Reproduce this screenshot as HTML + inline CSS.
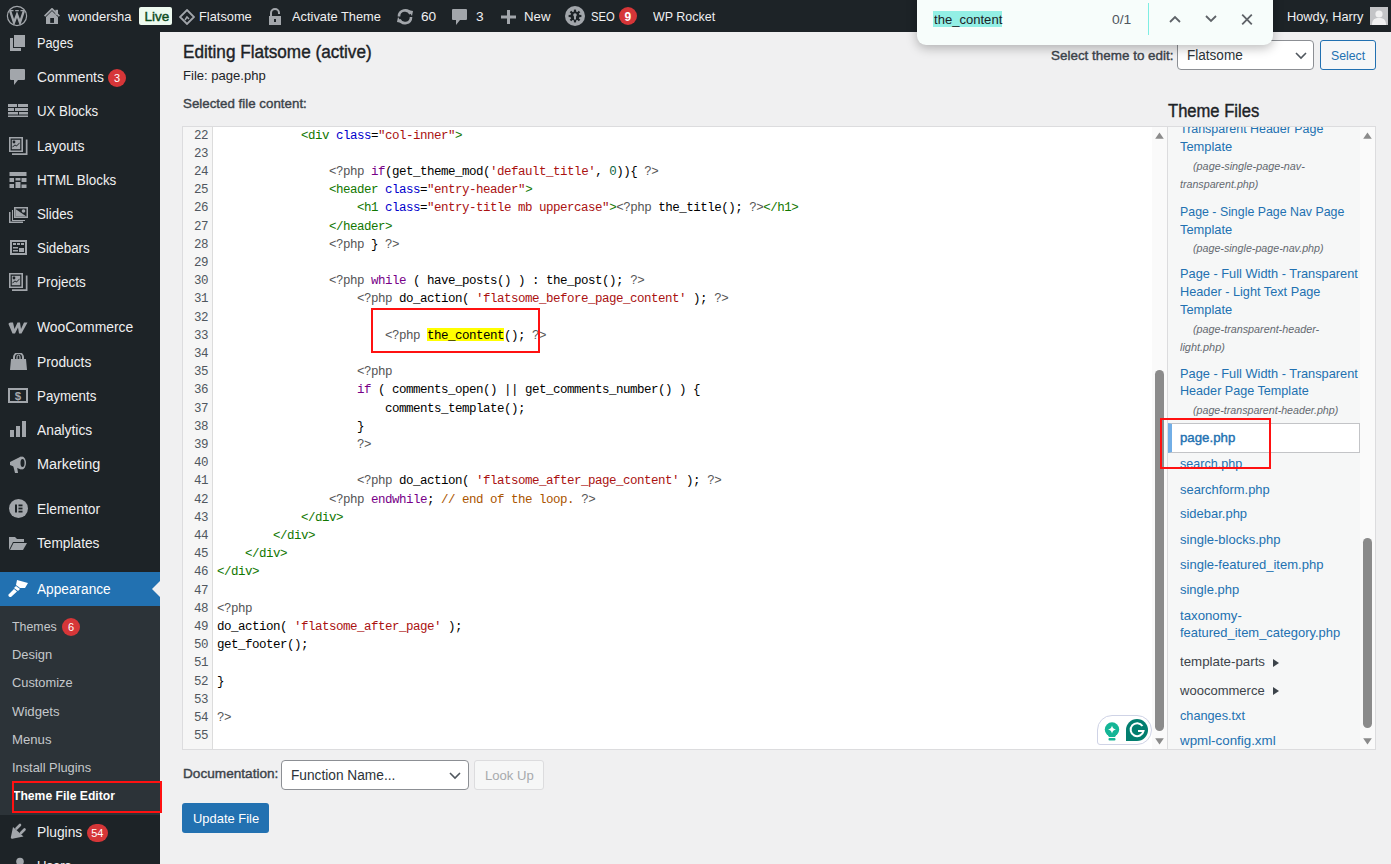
<!DOCTYPE html>
<html><head><meta charset="utf-8"><title>Edit Themes</title>
<style>
html,body{margin:0;padding:0;width:1391px;height:864px;overflow:hidden;background:#f0f0f1}
body{position:relative;font-family:"Liberation Sans", sans-serif}
.t{position:absolute;white-space:nowrap}
.r{position:absolute}
</style></head><body>
<div class="r" style="left:0px;top:0px;width:1391px;height:864px;background:#f0f0f1"></div>
<div class="r" style="left:0px;top:32px;width:160px;height:832px;background:#1d2327"></div>
<div class="r" style="left:0px;top:606px;width:160px;height:209px;background:#2c3338"></div>
<div class="r" style="left:0px;top:572px;width:160px;height:34px;background:#2271b1"></div>
<svg class="r" style="left:152px;top:581px" width="8" height="16" viewBox="0 0 8 16"><path d="M8 0 L0 8 L8 16 Z" fill="#f0f0f1"/></svg>
<div class="r" style="left:0px;top:0px;width:1391px;height:32px;background:#1d2327"></div>
<svg class="r" style="left:6px;top:5px" width="22" height="22" viewBox="0 0 22 22"><circle cx="11" cy="11" r="9.6" fill="none" stroke="#a2a6ab" stroke-width="1.2"/><path d="M4.2 6.2 L8 17.5 L11 9.5 L14 17.5 L17.8 6.2" fill="none" stroke="#a2a6ab" stroke-width="2.3" stroke-linejoin="miter"/><path d="M3.5 5.6 H7.5 M9.2 5.6 H12.8 M14.5 5.6 H18.5" stroke="#a2a6ab" stroke-width="1.2"/></svg>
<svg class="r" style="left:44px;top:8px" width="16" height="16" viewBox="0 0 16 16"><path d="M0.6 8.2 L8 0.8 L15.4 8.2" fill="none" stroke="#a2a6ab" stroke-width="1.7"/><path d="M2 9 L8 3 L14 9 V16 H2 Z" fill="#a2a6ab"/><rect x="11.4" y="1.8" width="2.6" height="5" fill="#a2a6ab"/><rect x="6.2" y="10" width="3.8" height="4.9" fill="#1d2327"/></svg>
<div class="t" id="t1" style="left:68.00px;top:10.07px;font-size:13.5px;line-height:13.5px;color:#f0f0f1;transform:scaleX(0.9626);transform-origin:0 0;">wondersha</div>
<div class="r" style="left:139px;top:7px;width:33px;height:18px;background:#edfaef;border-radius:2px"></div>
<div class="t" style="left:144.50px;top:9.57px;font-size:13.5px;line-height:13.5px;color:#0b4a1b;-webkit-text-stroke:0.4px currentColor;">Live</div>
<svg class="r" style="left:179px;top:9px" width="16" height="16" viewBox="0 0 16 16"><path d="M8 1 L15 8 L8 15 L1 8 Z" fill="none" stroke="#a2a6ab" stroke-width="1.8"/><path d="M6 11 L8 8 L10 10" fill="none" stroke="#a2a6ab" stroke-width="1.5"/></svg>
<div class="t" id="t2" style="left:198.50px;top:10.07px;font-size:13.5px;line-height:13.5px;color:#f0f0f1;transform:scaleX(0.9503);transform-origin:0 0;">Flatsome</div>
<svg class="r" style="left:268px;top:8px" width="14" height="17" viewBox="0 0 14 17"><path d="M3 8 V5 A4 4 0 0 1 11 5 V6" fill="none" stroke="#a2a6ab" stroke-width="2"/><rect x="1" y="8" width="12" height="9" fill="#a2a6ab"/><rect x="6" y="11" width="2" height="3" fill="#1d2327"/></svg>
<div class="t" id="t3" style="left:291.70px;top:10.07px;font-size:13.5px;line-height:13.5px;color:#f0f0f1;transform:scaleX(0.9500);transform-origin:0 0;">Activate Theme</div>
<svg class="r" style="left:396px;top:8px" width="18" height="17" viewBox="0 0 18 17"><path d="M3 8.5 A6 6 0 0 1 14.5 6" fill="none" stroke="#a2a6ab" stroke-width="2.6"/><path d="M15 9 A6 6 0 0 1 3.5 11.5" fill="none" stroke="#a2a6ab" stroke-width="2.6"/><path d="M12 2 L17 3 L16 8 Z" fill="#a2a6ab"/><path d="M6 15 L1 14 L2 9 Z" fill="#a2a6ab"/></svg>
<div class="t" id="t4" style="left:420.60px;top:10.07px;font-size:13.5px;line-height:13.5px;color:#f0f0f1;transform:scaleX(1.0126);transform-origin:0 0;">60</div>
<svg class="r" style="left:452px;top:9px" width="15" height="16" viewBox="0 0 15 16"><path d="M1 0 H14 A1 1 0 0 1 15 1 V10 A1 1 0 0 1 14 11 H8 L4 16 V11 H1 A1 1 0 0 1 0 10 V1 A1 1 0 0 1 1 0 Z" fill="#a2a6ab"/></svg>
<div class="t" id="t5" style="left:475.70px;top:10.07px;font-size:13.5px;line-height:13.5px;color:#f0f0f1;transform:scaleX(1.0141);transform-origin:0 0;">3</div>
<svg class="r" style="left:501px;top:10px" width="15" height="14" viewBox="0 0 15 14"><rect x="6" y="0" width="3" height="14" fill="#a2a6ab"/><rect x="0" y="5.5" width="15" height="3" fill="#a2a6ab"/></svg>
<div class="t" id="t6" style="left:524.30px;top:10.07px;font-size:13.5px;line-height:13.5px;color:#f0f0f1;transform:scaleX(0.9807);transform-origin:0 0;">New</div>
<svg class="r" style="left:565px;top:6px" width="20" height="20" viewBox="0 0 20 20"><circle cx="10" cy="10" r="10" fill="#a2a6ab"/><g fill="#1d2327"><circle cx="10" cy="10" r="4.6"/><rect x="8.9" y="3.6" width="2.2" height="3" transform="rotate(0 10 10)"/><rect x="8.9" y="3.6" width="2.2" height="3" transform="rotate(45 10 10)"/><rect x="8.9" y="3.6" width="2.2" height="3" transform="rotate(90 10 10)"/><rect x="8.9" y="3.6" width="2.2" height="3" transform="rotate(135 10 10)"/><rect x="8.9" y="3.6" width="2.2" height="3" transform="rotate(180 10 10)"/><rect x="8.9" y="3.6" width="2.2" height="3" transform="rotate(225 10 10)"/><rect x="8.9" y="3.6" width="2.2" height="3" transform="rotate(270 10 10)"/><rect x="8.9" y="3.6" width="2.2" height="3" transform="rotate(315 10 10)"/></g><circle cx="10" cy="9" r="1.8" fill="#a2a6ab"/><rect x="9" y="9" width="2" height="4.5" fill="#a2a6ab"/></svg>
<div class="t" id="t7" style="left:590.80px;top:10.07px;font-size:13.5px;line-height:13.5px;color:#f0f0f1;transform:scaleX(0.8302);transform-origin:0 0;">SEO</div>
<div class="r" style="left:619px;top:7px;width:18px;height:18px;background:#d63638;border-radius:50%"></div>
<div class="t" style="left:624.50px;top:10.84px;font-size:12px;line-height:12px;color:#ffffff;font-weight:700;">9</div>
<div class="t" id="t8" style="left:652.60px;top:10.07px;font-size:13.5px;line-height:13.5px;color:#f0f0f1;transform:scaleX(0.9237);transform-origin:0 0;">WP Rocket</div>
<div class="t" id="t9" style="left:1286.60px;top:10.07px;font-size:13.5px;line-height:13.5px;color:#f0f0f1;transform:scaleX(0.9455);transform-origin:0 0;">Howdy, Harry</div>
<div class="r" style="left:1370px;top:7px;width:18px;height:18px;background:#c3c4c7"></div>
<svg class="r" style="left:1370px;top:7px" width="18" height="18" viewBox="0 0 18 18"><circle cx="9" cy="7" r="3.6" fill="#f0f0f1"/><path d="M2 18 C2 12 5 11 9 11 C13 11 16 12 16 18 Z" fill="#f0f0f1"/></svg>
<div class="t" id="t10" style="left:182.60px;top:43.26px;font-size:18px;line-height:18px;color:#1d2327;transform:scaleX(0.9523);transform-origin:0 0;-webkit-text-stroke:0.4px currentColor;">Editing Flatsome (active)</div>
<div class="t" id="t11" style="left:182.60px;top:68.79px;font-size:13px;line-height:13px;color:#1d2327;transform:scaleX(1.0046);transform-origin:0 0;">File: page.php</div>
<div class="t" id="t12" style="left:182.60px;top:96.87px;font-size:13.5px;line-height:13.5px;color:#3c434a;transform:scaleX(0.9877);transform-origin:0 0;-webkit-text-stroke:0.4px currentColor;">Selected file content:</div>
<div class="t" id="t13" style="left:1051.00px;top:49.07px;font-size:13.5px;line-height:13.5px;color:#3c434a;transform:scaleX(0.9954);transform-origin:0 0;-webkit-text-stroke:0.4px currentColor;">Select theme to edit:</div>
<div class="r" style="left:1177px;top:40px;width:137px;height:30px;background:#fff;border:1px solid #8c8f94;border-radius:4px;box-sizing:border-box"></div>
<div class="t" id="t14" style="left:1186.60px;top:48.15px;font-size:14px;line-height:14px;color:#2c3338;transform:scaleX(0.9676);transform-origin:0 0;">Flatsome</div>
<svg class="r" style="left:1295px;top:51.5px" width="12" height="8" viewBox="0 0 12 8"><path d="M1 1 L6 6 L11 1" fill="none" stroke="#50575e" stroke-width="1.6"/></svg>
<div class="r" style="left:1320px;top:40px;width:56px;height:30px;background:#f6f7f7;border:1px solid #2271b1;border-radius:3px;box-sizing:border-box"></div>
<div class="t" id="t15" style="left:1331.40px;top:48.57px;font-size:13.5px;line-height:13.5px;color:#2271b1;transform:scaleX(0.9096);transform-origin:0 0;">Select</div>
<div class="t" id="t16" style="left:36.50px;top:35.75px;font-size:14px;line-height:14px;color:#f0f0f1;transform:scaleX(0.9109);transform-origin:0 0;">Pages</div>
<div class="t" id="t17" style="left:36.50px;top:69.95px;font-size:14px;line-height:14px;color:#f0f0f1;transform:scaleX(0.9873);transform-origin:0 0;">Comments</div>
<div class="t" id="t18" style="left:36.50px;top:103.75px;font-size:14px;line-height:14px;color:#f0f0f1;transform:scaleX(0.9476);transform-origin:0 0;">UX Blocks</div>
<div class="t" id="t19" style="left:36.50px;top:138.95px;font-size:14px;line-height:14px;color:#f0f0f1;transform:scaleX(0.9667);transform-origin:0 0;">Layouts</div>
<div class="t" id="t20" style="left:36.50px;top:172.55px;font-size:14px;line-height:14px;color:#f0f0f1;transform:scaleX(0.9587);transform-origin:0 0;">HTML Blocks</div>
<div class="t" id="t21" style="left:36.50px;top:206.55px;font-size:14px;line-height:14px;color:#f0f0f1;transform:scaleX(0.9490);transform-origin:0 0;">Slides</div>
<div class="t" id="t22" style="left:36.50px;top:240.75px;font-size:14px;line-height:14px;color:#f0f0f1;transform:scaleX(0.9536);transform-origin:0 0;">Sidebars</div>
<div class="t" id="t23" style="left:36.50px;top:274.95px;font-size:14px;line-height:14px;color:#f0f0f1;transform:scaleX(0.9630);transform-origin:0 0;">Projects</div>
<div class="t" id="t24" style="left:36.50px;top:320.05px;font-size:14px;line-height:14px;color:#f0f0f1;transform:scaleX(0.9921);transform-origin:0 0;">WooCommerce</div>
<div class="t" id="t25" style="left:36.50px;top:354.75px;font-size:14px;line-height:14px;color:#f0f0f1;transform:scaleX(0.9833);transform-origin:0 0;">Products</div>
<div class="t" id="t26" style="left:36.50px;top:388.65px;font-size:14px;line-height:14px;color:#f0f0f1;transform:scaleX(0.9526);transform-origin:0 0;">Payments</div>
<div class="t" id="t27" style="left:36.50px;top:422.65px;font-size:14px;line-height:14px;color:#f0f0f1;transform:scaleX(0.9857);transform-origin:0 0;">Analytics</div>
<div class="t" id="t28" style="left:36.50px;top:456.65px;font-size:14px;line-height:14px;color:#f0f0f1;transform:scaleX(1.0309);transform-origin:0 0;">Marketing</div>
<div class="t" id="t29" style="left:36.50px;top:501.85px;font-size:14px;line-height:14px;color:#f0f0f1;transform:scaleX(0.9885);transform-origin:0 0;">Elementor</div>
<div class="t" id="t30" style="left:36.50px;top:536.15px;font-size:14px;line-height:14px;color:#f0f0f1;transform:scaleX(0.9782);transform-origin:0 0;">Templates</div>
<div class="t" id="t31" style="left:36.50px;top:582.15px;font-size:14px;line-height:14px;color:#ffffff;transform:scaleX(0.9762);transform-origin:0 0;">Appearance</div>
<div class="t" id="t32" style="left:36.50px;top:824.75px;font-size:14px;line-height:14px;color:#f0f0f1;transform:scaleX(0.9849);transform-origin:0 0;">Plugins</div>
<div class="t" id="t33" style="left:36.50px;top:859.15px;font-size:14px;line-height:14px;color:#f0f0f1;transform:scaleX(0.9378);transform-origin:0 0;">Users</div>
<div class="r" style="left:108px;top:68.5px;width:18px;height:18px;background:#d63638;border-radius:9px"></div>
<div class="t" style="left:108px;top:68.5px;width:18px;height:18px;line-height:18px;text-align:center;font-size:11px;color:#fff">3</div>
<div class="r" style="left:62px;top:618px;width:18px;height:18px;background:#d63638;border-radius:9px"></div>
<div class="t" style="left:62px;top:618px;width:18px;height:18px;line-height:18px;text-align:center;font-size:11px;color:#fff">6</div>
<div class="r" style="left:86.5px;top:824px;width:21.5px;height:18px;background:#d63638;border-radius:9px"></div>
<div class="t" style="left:86.5px;top:824px;width:21.5px;height:18px;line-height:18px;text-align:center;font-size:11px;color:#fff">54</div>
<div class="t" id="t34" style="left:12.30px;top:619.99px;font-size:13px;line-height:13px;color:#c5c8cb;transform:scaleX(0.9526);transform-origin:0 0;">Themes</div>
<div class="t" id="t35" style="left:12.30px;top:648.19px;font-size:13px;line-height:13px;color:#c5c8cb;transform:scaleX(0.9927);transform-origin:0 0;">Design</div>
<div class="t" id="t36" style="left:12.30px;top:676.39px;font-size:13px;line-height:13px;color:#c5c8cb;transform:scaleX(0.9861);transform-origin:0 0;">Customize</div>
<div class="t" id="t37" style="left:12.30px;top:704.59px;font-size:13px;line-height:13px;color:#c5c8cb;transform:scaleX(1.0132);transform-origin:0 0;">Widgets</div>
<div class="t" id="t38" style="left:12.30px;top:732.79px;font-size:13px;line-height:13px;color:#c5c8cb;transform:scaleX(1.0117);transform-origin:0 0;">Menus</div>
<div class="t" id="t39" style="left:12.30px;top:760.99px;font-size:13px;line-height:13px;color:#c5c8cb;transform:scaleX(0.9869);transform-origin:0 0;">Install Plugins</div>
<div class="t" id="t40" style="left:13.40px;top:788.99px;font-size:13px;line-height:13px;color:#ffffff;transform:scaleX(0.9345);transform-origin:0 0;font-weight:700;">Theme File Editor</div>
<svg class="r" style="left:10px;top:35px" width="15" height="16" viewBox="0 0 15 16"><rect x="4" y="0" width="11" height="12" fill="#a2a6ab"/><path d="M0 3 H3 V13 H11 V16 H0 Z" fill="#a2a6ab"/></svg>
<svg class="r" style="left:10px;top:69px" width="15" height="16" viewBox="0 0 15 16"><path d="M1 0 H14 A1 1 0 0 1 15 1 V10 A1 1 0 0 1 14 11 H8 L4 16 V11 H1 A1 1 0 0 1 0 10 V1 A1 1 0 0 1 1 0 Z" fill="#a2a6ab"/></svg>
<svg class="r" style="left:8px;top:104px" width="20" height="13" viewBox="0 0 20 13"><rect x="0" y="0" width="9" height="3" fill="#a2a6ab"/><rect x="10" y="0" width="10" height="3" fill="#a2a6ab"/><rect x="0" y="4" width="6" height="3" fill="#a2a6ab"/><rect x="7" y="4" width="13" height="3" fill="#a2a6ab"/><rect x="0" y="8" width="10" height="2.5" fill="#a2a6ab"/><rect x="11" y="8" width="9" height="2.5" fill="#a2a6ab"/><rect x="0" y="11.5" width="20" height="1.5" fill="#a2a6ab"/></svg>
<svg class="r" style="left:9px;top:137px" width="19" height="18" viewBox="0 0 19 18"><path d="M0 0 H14 V15 H0 Z M1.6 1.6 V13.4 H12.4 V1.6 Z" fill="#a2a6ab" fill-rule="evenodd"/><path d="M15.5 2.5 H18.5 V18 H3 V16.3 H16.8 V2.5 Z" fill="#a2a6ab"/><rect x="2.8" y="2.8" width="8.4" height="9.4" fill="#a2a6ab"/><circle cx="5" cy="5" r="1.4" fill="#1d2327"/><path d="M3.5 9.5 L6 7.5 L7.5 8.5 L10.5 5.5 L10.5 6.5 L7.5 9.6 L6 8.6 L3.5 10.5 Z" fill="#1d2327"/></svg>
<svg class="r" style="left:9px;top:172px" width="18" height="16" viewBox="0 0 18 16"><rect x="0.5" y="0" width="17" height="4" fill="#a2a6ab"/><rect x="0.5" y="6" width="4.5" height="4" fill="#a2a6ab"/><rect x="6.5" y="6" width="5" height="2.5" fill="#a2a6ab"/><rect x="12.5" y="6" width="5" height="4" fill="#a2a6ab"/><rect x="0.5" y="12" width="4.5" height="4" fill="#a2a6ab"/><rect x="6.5" y="10" width="5" height="6" fill="#a2a6ab"/><rect x="12.5" y="12.5" width="5" height="3.5" fill="#a2a6ab"/></svg>
<svg class="r" style="left:9px;top:207px" width="19" height="16" viewBox="0 0 19 16"><path d="M5 0 H19 V11 H5 Z M6.5 1.5 V9.5 H17.5 V1.5 Z" fill="#a2a6ab" fill-rule="evenodd"/><path d="M6.5 2 L17.5 9.5 H6.5 Z" fill="#a2a6ab"/><circle cx="14.5" cy="4" r="1.8" fill="#a2a6ab"/><path d="M3 3 H4 V13 H16 V14 H3 Z" fill="#a2a6ab"/><path d="M0 5 H1.5 V14.5 H14 V16 H0 Z" fill="#a2a6ab"/></svg>
<svg class="r" style="left:10px;top:240px" width="17" height="15" viewBox="0 0 17 15"><path d="M0 0 H17 V15 H0 Z M2 2 V13 H15 V2 Z" fill="#a2a6ab" fill-rule="evenodd"/><rect x="3" y="3" width="3" height="2" fill="#a2a6ab"/><rect x="7" y="3" width="3" height="2" fill="#a2a6ab"/><rect x="11" y="3" width="3" height="2" fill="#a2a6ab"/><rect x="3" y="7" width="5" height="1.5" fill="#a2a6ab"/><rect x="3" y="10" width="5" height="1.5" fill="#a2a6ab"/><rect x="9" y="8" width="5" height="4" fill="#a2a6ab"/></svg>
<svg class="r" style="left:9px;top:273px" width="19" height="18" viewBox="0 0 19 18"><path d="M0 0 H14 V15 H0 Z M1.6 1.6 V13.4 H12.4 V1.6 Z" fill="#a2a6ab" fill-rule="evenodd"/><path d="M15.5 2.5 H18.5 V18 H3 V16.3 H16.8 V2.5 Z" fill="#a2a6ab"/><rect x="2.8" y="2.8" width="8.4" height="9.4" fill="#a2a6ab"/><circle cx="5" cy="5" r="1.4" fill="#1d2327"/><path d="M3.5 9.5 L6 7.5 L7.5 8.5 L10.5 5.5 L10.5 6.5 L7.5 9.6 L6 8.6 L3.5 10.5 Z" fill="#1d2327"/></svg>
<svg class="r" style="left:8px;top:322px" width="20" height="12" viewBox="0 0 20 12"><path d="M0.5 2 Q0.5 0.5 2.5 0.5 L5 0.5 L6.5 7 L9.5 0.5 L12 0.5 L13 7 L16 0.5 L19.5 0.5 L13.5 11.5 L11 11.5 L10 5.5 L7 11.5 L4.5 11.5 Z" fill="#a2a6ab"/></svg>
<svg class="r" style="left:10px;top:353px" width="17" height="17" viewBox="0 0 17 17"><path d="M4 6 V4 A4.5 4 0 0 1 13 4 V6" fill="none" stroke="#a2a6ab" stroke-width="2"/><path d="M7 6 V4 A1.5 2 0 0 1 10 4 V6" fill="none" stroke="#a2a6ab" stroke-width="1.2"/><path d="M1 6 H16 L17 17 H0 Z" fill="#a2a6ab"/></svg>
<svg class="r" style="left:8px;top:388px" width="20" height="15" viewBox="0 0 20 15"><path d="M0 0 H20 V15 H0 Z M2 2 V13 H18 V2 Z" fill="#a2a6ab" fill-rule="evenodd"/><text x="10" y="12" text-anchor="middle" font-family="Liberation Sans" font-size="11.5" font-weight="700" fill="#a2a6ab">$</text></svg>
<svg class="r" style="left:10px;top:421px" width="16" height="16" viewBox="0 0 16 16"><rect x="0" y="9" width="4" height="7" fill="#a2a6ab"/><rect x="6" y="5" width="4" height="11" fill="#a2a6ab"/><rect x="12" y="0" width="4" height="16" fill="#a2a6ab"/></svg>
<svg class="r" style="left:9px;top:455px" width="18" height="18" viewBox="0 0 18 18"><path d="M1 7 L12 1.5 V14.5 L1 10 Z" fill="#a2a6ab"/><ellipse cx="13" cy="8" rx="4" ry="6.5" fill="#a2a6ab"/><ellipse cx="13.5" cy="8" rx="2" ry="4" fill="#1d2327"/><path d="M4 10 L8 11.5 L9 18 L6 18 Z" fill="#a2a6ab"/></svg>
<svg class="r" style="left:9px;top:499px" width="19" height="19" viewBox="0 0 19 19"><circle cx="9.5" cy="9.5" r="9.5" fill="#a2a6ab"/><rect x="6" y="5.5" width="2" height="8" fill="#1d2327"/><rect x="9.5" y="5.5" width="4" height="1.8" fill="#1d2327"/><rect x="9.5" y="8.6" width="4" height="1.8" fill="#1d2327"/><rect x="9.5" y="11.7" width="4" height="1.8" fill="#1d2327"/></svg>
<svg class="r" style="left:9px;top:536px" width="18" height="14" viewBox="0 0 18 14"><path d="M0 1 H6 L8 3 H15 V6 H4 L0 14 Z" fill="#a2a6ab"/><path d="M4.5 7 H18 L14 14 H1 Z" fill="#a2a6ab"/></svg>
<svg class="r" style="left:8px;top:580px" width="20" height="17" viewBox="0 0 20 17"><path d="M9 0 L20 3 L17 8 L12 8 L8 5 Z" fill="#fff"/><path d="M8 6 L12 9 L10 11 L6 8 Z" fill="#fff"/><path d="M6 9 L9 11.5 L3 17 A2 2 0 0 1 0.5 14.5 Z" fill="#fff"/></svg>
<svg class="r" style="left:10px;top:822px" width="17" height="18" viewBox="0 0 17 18"><path d="M6.5 6.5 L10 3" stroke="#a2a6ab" stroke-width="2.6" stroke-linecap="round"/><path d="M11 11 L14.5 7.5" stroke="#a2a6ab" stroke-width="2.6" stroke-linecap="round"/><path d="M3 5 L13.5 14.5 L3.5 16.5 Q1 17.5 0.8 15.5 Z" fill="#a2a6ab"/></svg>
<svg class="r" style="left:13px;top:857px" width="14" height="10" viewBox="0 0 14 10"><circle cx="7" cy="4.5" r="3.8" fill="#a2a6ab"/></svg>
<div class="r" style="left:182px;top:126px;width:986px;height:624px;background:#fff;border:1px solid #dcdcde;box-sizing:border-box"></div>
<div class="r" style="left:183px;top:127px;width:30px;height:622px;background:#f6f6f6;border-right:1px solid #dcdcdc;box-sizing:border-box"></div>
<div class="r" style="left:1152px;top:127px;width:15px;height:622px;background:#fafafa"></div>
<div class="r" style="left:1155px;top:370px;width:9px;height:361px;background:#8b8b8b;border-radius:4.5px"></div>
<svg class="r" style="left:1155px;top:132px" width="9" height="7" viewBox="0 0 9 7"><path d="M4.5 0.5 L8.8 6.8 H0.2 Z" fill="#8b8b8b"/></svg>
<svg class="r" style="left:1155px;top:738px" width="9" height="7" viewBox="0 0 9 7"><path d="M0.2 0.2 H8.8 L4.5 6.5 Z" fill="#8b8b8b"/></svg>
<div class="r" style="left:427px;top:328px;width:77px;height:13px;background:#ffff00"></div>
<div class="t" style="left:183.00px;top:129.52px;font-size:12.5px;line-height:12.5px;color:#50575e;font-family:'Liberation Mono', monospace;letter-spacing:-0.5px;width:25px;text-align:right;">22</div>
<div class="t" style="left:217.00px;top:129.52px;font-size:12.5px;line-height:12.5px;color:#000;font-family:'Liberation Mono', monospace;letter-spacing:-0.5px;white-space:pre;"><span style="color:#000">            </span><span style="color:#170">&lt;div</span><span style="color:#000"> </span><span style="color:#00c">class</span><span style="color:#000">=</span><span style="color:#a11">&quot;col-inner&quot;</span><span style="color:#170">&gt;</span></div>
<div class="t" style="left:183.00px;top:147.72px;font-size:12.5px;line-height:12.5px;color:#50575e;font-family:'Liberation Mono', monospace;letter-spacing:-0.5px;width:25px;text-align:right;">23</div>
<div class="t" style="left:183.00px;top:165.92px;font-size:12.5px;line-height:12.5px;color:#50575e;font-family:'Liberation Mono', monospace;letter-spacing:-0.5px;width:25px;text-align:right;">24</div>
<div class="t" style="left:217.00px;top:165.92px;font-size:12.5px;line-height:12.5px;color:#000;font-family:'Liberation Mono', monospace;letter-spacing:-0.5px;white-space:pre;"><span style="color:#000">                </span><span style="color:#555">&lt;?php</span><span style="color:#000"> </span><span style="color:#708">if</span><span style="color:#000">(get_theme_mod(</span><span style="color:#a11">&#x27;default_title&#x27;</span><span style="color:#000">, </span><span style="color:#164">0</span><span style="color:#000">)){ </span><span style="color:#555">?&gt;</span></div>
<div class="t" style="left:183.00px;top:184.12px;font-size:12.5px;line-height:12.5px;color:#50575e;font-family:'Liberation Mono', monospace;letter-spacing:-0.5px;width:25px;text-align:right;">25</div>
<div class="t" style="left:217.00px;top:184.12px;font-size:12.5px;line-height:12.5px;color:#000;font-family:'Liberation Mono', monospace;letter-spacing:-0.5px;white-space:pre;"><span style="color:#000">                </span><span style="color:#170">&lt;header</span><span style="color:#000"> </span><span style="color:#00c">class</span><span style="color:#000">=</span><span style="color:#a11">&quot;entry-header&quot;</span><span style="color:#170">&gt;</span></div>
<div class="t" style="left:183.00px;top:202.32px;font-size:12.5px;line-height:12.5px;color:#50575e;font-family:'Liberation Mono', monospace;letter-spacing:-0.5px;width:25px;text-align:right;">26</div>
<div class="t" style="left:217.00px;top:202.32px;font-size:12.5px;line-height:12.5px;color:#000;font-family:'Liberation Mono', monospace;letter-spacing:-0.5px;white-space:pre;"><span style="color:#000">                    </span><span style="color:#170">&lt;h1</span><span style="color:#000"> </span><span style="color:#00c">class</span><span style="color:#000">=</span><span style="color:#a11">&quot;entry-title mb uppercase&quot;</span><span style="color:#170">&gt;</span><span style="color:#555">&lt;?php</span><span style="color:#000"> the_title(); </span><span style="color:#555">?&gt;</span><span style="color:#170">&lt;/h1&gt;</span></div>
<div class="t" style="left:183.00px;top:220.52px;font-size:12.5px;line-height:12.5px;color:#50575e;font-family:'Liberation Mono', monospace;letter-spacing:-0.5px;width:25px;text-align:right;">27</div>
<div class="t" style="left:217.00px;top:220.52px;font-size:12.5px;line-height:12.5px;color:#000;font-family:'Liberation Mono', monospace;letter-spacing:-0.5px;white-space:pre;"><span style="color:#000">                </span><span style="color:#170">&lt;/header&gt;</span></div>
<div class="t" style="left:183.00px;top:238.72px;font-size:12.5px;line-height:12.5px;color:#50575e;font-family:'Liberation Mono', monospace;letter-spacing:-0.5px;width:25px;text-align:right;">28</div>
<div class="t" style="left:217.00px;top:238.72px;font-size:12.5px;line-height:12.5px;color:#000;font-family:'Liberation Mono', monospace;letter-spacing:-0.5px;white-space:pre;"><span style="color:#000">                </span><span style="color:#555">&lt;?php</span><span style="color:#000"> } </span><span style="color:#555">?&gt;</span></div>
<div class="t" style="left:183.00px;top:256.92px;font-size:12.5px;line-height:12.5px;color:#50575e;font-family:'Liberation Mono', monospace;letter-spacing:-0.5px;width:25px;text-align:right;">29</div>
<div class="t" style="left:183.00px;top:275.12px;font-size:12.5px;line-height:12.5px;color:#50575e;font-family:'Liberation Mono', monospace;letter-spacing:-0.5px;width:25px;text-align:right;">30</div>
<div class="t" style="left:217.00px;top:275.12px;font-size:12.5px;line-height:12.5px;color:#000;font-family:'Liberation Mono', monospace;letter-spacing:-0.5px;white-space:pre;"><span style="color:#000">                </span><span style="color:#555">&lt;?php</span><span style="color:#000"> </span><span style="color:#708">while</span><span style="color:#000"> ( have_posts() ) : the_post(); </span><span style="color:#555">?&gt;</span></div>
<div class="t" style="left:183.00px;top:293.32px;font-size:12.5px;line-height:12.5px;color:#50575e;font-family:'Liberation Mono', monospace;letter-spacing:-0.5px;width:25px;text-align:right;">31</div>
<div class="t" style="left:217.00px;top:293.32px;font-size:12.5px;line-height:12.5px;color:#000;font-family:'Liberation Mono', monospace;letter-spacing:-0.5px;white-space:pre;"><span style="color:#000">                    </span><span style="color:#555">&lt;?php</span><span style="color:#000"> do_action( </span><span style="color:#a11">&#x27;flatsome_before_page_content&#x27;</span><span style="color:#000"> ); </span><span style="color:#555">?&gt;</span></div>
<div class="t" style="left:183.00px;top:311.52px;font-size:12.5px;line-height:12.5px;color:#50575e;font-family:'Liberation Mono', monospace;letter-spacing:-0.5px;width:25px;text-align:right;">32</div>
<div class="t" style="left:183.00px;top:329.72px;font-size:12.5px;line-height:12.5px;color:#50575e;font-family:'Liberation Mono', monospace;letter-spacing:-0.5px;width:25px;text-align:right;">33</div>
<div class="t" style="left:217.00px;top:329.72px;font-size:12.5px;line-height:12.5px;color:#000;font-family:'Liberation Mono', monospace;letter-spacing:-0.5px;white-space:pre;"><span style="color:#000">                        </span><span style="color:#555">&lt;?php</span><span style="color:#000"> </span><span style="color:#000">the_content</span><span style="color:#000">(); </span><span style="color:#555">?&gt;</span></div>
<div class="t" style="left:183.00px;top:347.92px;font-size:12.5px;line-height:12.5px;color:#50575e;font-family:'Liberation Mono', monospace;letter-spacing:-0.5px;width:25px;text-align:right;">34</div>
<div class="t" style="left:183.00px;top:366.12px;font-size:12.5px;line-height:12.5px;color:#50575e;font-family:'Liberation Mono', monospace;letter-spacing:-0.5px;width:25px;text-align:right;">35</div>
<div class="t" style="left:217.00px;top:366.12px;font-size:12.5px;line-height:12.5px;color:#000;font-family:'Liberation Mono', monospace;letter-spacing:-0.5px;white-space:pre;"><span style="color:#000">                    </span><span style="color:#555">&lt;?php</span></div>
<div class="t" style="left:183.00px;top:384.32px;font-size:12.5px;line-height:12.5px;color:#50575e;font-family:'Liberation Mono', monospace;letter-spacing:-0.5px;width:25px;text-align:right;">36</div>
<div class="t" style="left:217.00px;top:384.32px;font-size:12.5px;line-height:12.5px;color:#000;font-family:'Liberation Mono', monospace;letter-spacing:-0.5px;white-space:pre;"><span style="color:#000">                    </span><span style="color:#708">if</span><span style="color:#000"> ( comments_open() || get_comments_number() ) {</span></div>
<div class="t" style="left:183.00px;top:402.52px;font-size:12.5px;line-height:12.5px;color:#50575e;font-family:'Liberation Mono', monospace;letter-spacing:-0.5px;width:25px;text-align:right;">37</div>
<div class="t" style="left:217.00px;top:402.52px;font-size:12.5px;line-height:12.5px;color:#000;font-family:'Liberation Mono', monospace;letter-spacing:-0.5px;white-space:pre;"><span style="color:#000">                        </span><span style="color:#000">comments_template();</span></div>
<div class="t" style="left:183.00px;top:420.72px;font-size:12.5px;line-height:12.5px;color:#50575e;font-family:'Liberation Mono', monospace;letter-spacing:-0.5px;width:25px;text-align:right;">38</div>
<div class="t" style="left:217.00px;top:420.72px;font-size:12.5px;line-height:12.5px;color:#000;font-family:'Liberation Mono', monospace;letter-spacing:-0.5px;white-space:pre;"><span style="color:#000">                    </span><span style="color:#000">}</span></div>
<div class="t" style="left:183.00px;top:438.92px;font-size:12.5px;line-height:12.5px;color:#50575e;font-family:'Liberation Mono', monospace;letter-spacing:-0.5px;width:25px;text-align:right;">39</div>
<div class="t" style="left:217.00px;top:438.92px;font-size:12.5px;line-height:12.5px;color:#000;font-family:'Liberation Mono', monospace;letter-spacing:-0.5px;white-space:pre;"><span style="color:#000">                    </span><span style="color:#555">?&gt;</span></div>
<div class="t" style="left:183.00px;top:457.12px;font-size:12.5px;line-height:12.5px;color:#50575e;font-family:'Liberation Mono', monospace;letter-spacing:-0.5px;width:25px;text-align:right;">40</div>
<div class="t" style="left:183.00px;top:475.32px;font-size:12.5px;line-height:12.5px;color:#50575e;font-family:'Liberation Mono', monospace;letter-spacing:-0.5px;width:25px;text-align:right;">41</div>
<div class="t" style="left:217.00px;top:475.32px;font-size:12.5px;line-height:12.5px;color:#000;font-family:'Liberation Mono', monospace;letter-spacing:-0.5px;white-space:pre;"><span style="color:#000">                    </span><span style="color:#555">&lt;?php</span><span style="color:#000"> do_action( </span><span style="color:#a11">&#x27;flatsome_after_page_content&#x27;</span><span style="color:#000"> ); </span><span style="color:#555">?&gt;</span></div>
<div class="t" style="left:183.00px;top:493.52px;font-size:12.5px;line-height:12.5px;color:#50575e;font-family:'Liberation Mono', monospace;letter-spacing:-0.5px;width:25px;text-align:right;">42</div>
<div class="t" style="left:217.00px;top:493.52px;font-size:12.5px;line-height:12.5px;color:#000;font-family:'Liberation Mono', monospace;letter-spacing:-0.5px;white-space:pre;"><span style="color:#000">                </span><span style="color:#555">&lt;?php</span><span style="color:#000"> </span><span style="color:#708">endwhile</span><span style="color:#000">; </span><span style="color:#a50">// end of the loop. </span><span style="color:#555">?&gt;</span></div>
<div class="t" style="left:183.00px;top:511.72px;font-size:12.5px;line-height:12.5px;color:#50575e;font-family:'Liberation Mono', monospace;letter-spacing:-0.5px;width:25px;text-align:right;">43</div>
<div class="t" style="left:217.00px;top:511.72px;font-size:12.5px;line-height:12.5px;color:#000;font-family:'Liberation Mono', monospace;letter-spacing:-0.5px;white-space:pre;"><span style="color:#000">            </span><span style="color:#170">&lt;/div&gt;</span></div>
<div class="t" style="left:183.00px;top:529.92px;font-size:12.5px;line-height:12.5px;color:#50575e;font-family:'Liberation Mono', monospace;letter-spacing:-0.5px;width:25px;text-align:right;">44</div>
<div class="t" style="left:217.00px;top:529.92px;font-size:12.5px;line-height:12.5px;color:#000;font-family:'Liberation Mono', monospace;letter-spacing:-0.5px;white-space:pre;"><span style="color:#000">        </span><span style="color:#170">&lt;/div&gt;</span></div>
<div class="t" style="left:183.00px;top:548.12px;font-size:12.5px;line-height:12.5px;color:#50575e;font-family:'Liberation Mono', monospace;letter-spacing:-0.5px;width:25px;text-align:right;">45</div>
<div class="t" style="left:217.00px;top:548.12px;font-size:12.5px;line-height:12.5px;color:#000;font-family:'Liberation Mono', monospace;letter-spacing:-0.5px;white-space:pre;"><span style="color:#000">    </span><span style="color:#170">&lt;/div&gt;</span></div>
<div class="t" style="left:183.00px;top:566.32px;font-size:12.5px;line-height:12.5px;color:#50575e;font-family:'Liberation Mono', monospace;letter-spacing:-0.5px;width:25px;text-align:right;">46</div>
<div class="t" style="left:217.00px;top:566.32px;font-size:12.5px;line-height:12.5px;color:#000;font-family:'Liberation Mono', monospace;letter-spacing:-0.5px;white-space:pre;"><span style="color:#170">&lt;/div&gt;</span></div>
<div class="t" style="left:183.00px;top:584.52px;font-size:12.5px;line-height:12.5px;color:#50575e;font-family:'Liberation Mono', monospace;letter-spacing:-0.5px;width:25px;text-align:right;">47</div>
<div class="t" style="left:183.00px;top:602.72px;font-size:12.5px;line-height:12.5px;color:#50575e;font-family:'Liberation Mono', monospace;letter-spacing:-0.5px;width:25px;text-align:right;">48</div>
<div class="t" style="left:217.00px;top:602.72px;font-size:12.5px;line-height:12.5px;color:#000;font-family:'Liberation Mono', monospace;letter-spacing:-0.5px;white-space:pre;"><span style="color:#555">&lt;?php</span></div>
<div class="t" style="left:183.00px;top:620.92px;font-size:12.5px;line-height:12.5px;color:#50575e;font-family:'Liberation Mono', monospace;letter-spacing:-0.5px;width:25px;text-align:right;">49</div>
<div class="t" style="left:217.00px;top:620.92px;font-size:12.5px;line-height:12.5px;color:#000;font-family:'Liberation Mono', monospace;letter-spacing:-0.5px;white-space:pre;"><span style="color:#000">do_action( </span><span style="color:#a11">&#x27;flatsome_after_page&#x27;</span><span style="color:#000"> );</span></div>
<div class="t" style="left:183.00px;top:639.12px;font-size:12.5px;line-height:12.5px;color:#50575e;font-family:'Liberation Mono', monospace;letter-spacing:-0.5px;width:25px;text-align:right;">50</div>
<div class="t" style="left:217.00px;top:639.12px;font-size:12.5px;line-height:12.5px;color:#000;font-family:'Liberation Mono', monospace;letter-spacing:-0.5px;white-space:pre;"><span style="color:#000">get_footer();</span></div>
<div class="t" style="left:183.00px;top:657.32px;font-size:12.5px;line-height:12.5px;color:#50575e;font-family:'Liberation Mono', monospace;letter-spacing:-0.5px;width:25px;text-align:right;">51</div>
<div class="t" style="left:183.00px;top:675.52px;font-size:12.5px;line-height:12.5px;color:#50575e;font-family:'Liberation Mono', monospace;letter-spacing:-0.5px;width:25px;text-align:right;">52</div>
<div class="t" style="left:217.00px;top:675.52px;font-size:12.5px;line-height:12.5px;color:#000;font-family:'Liberation Mono', monospace;letter-spacing:-0.5px;white-space:pre;"><span style="color:#000">}</span></div>
<div class="t" style="left:183.00px;top:693.72px;font-size:12.5px;line-height:12.5px;color:#50575e;font-family:'Liberation Mono', monospace;letter-spacing:-0.5px;width:25px;text-align:right;">53</div>
<div class="t" style="left:183.00px;top:711.92px;font-size:12.5px;line-height:12.5px;color:#50575e;font-family:'Liberation Mono', monospace;letter-spacing:-0.5px;width:25px;text-align:right;">54</div>
<div class="t" style="left:217.00px;top:711.92px;font-size:12.5px;line-height:12.5px;color:#000;font-family:'Liberation Mono', monospace;letter-spacing:-0.5px;white-space:pre;"><span style="color:#555">?&gt;</span></div>
<div class="t" style="left:183.00px;top:730.12px;font-size:12.5px;line-height:12.5px;color:#50575e;font-family:'Liberation Mono', monospace;letter-spacing:-0.5px;width:25px;text-align:right;">55</div>
<div class="r" style="left:1097px;top:715px;width:55px;height:30px;background:#fff;border:1px solid #cfd3e6;border-radius:15px 15px 15px 3px;box-sizing:border-box"></div>
<svg class="r" style="left:1104px;top:721.5px" width="16" height="19" viewBox="0 0 16 19"><circle cx="8" cy="7.5" r="7.2" fill="#14b596"/><path d="M2.5 11 L5 15 H11 L13.5 11 Z" fill="#14b596"/><rect x="4.5" y="16" width="7" height="2.6" rx="1" fill="#14b596"/><path d="M8 3.5 Q8.6 7 12 7.5 Q8.6 8 8 11.5 Q7.4 8 4 7.5 Q7.4 7 8 3.5 Z" fill="#fff"/></svg>
<svg class="r" style="left:1126px;top:719px" width="22" height="22" viewBox="0 0 22 22"><path d="M11 0 A11 11 0 0 1 11 22 H0 V11 A11 11 0 0 1 11 0 Z" fill="#027e6f"/><path d="M16.5 7 A6.5 6.5 0 1 0 17.5 12 H12" fill="none" stroke="#fff" stroke-width="2"/></svg>
<div class="t" id="t41" style="left:1168.20px;top:101.76px;font-size:18px;line-height:18px;color:#1d2327;transform:scaleX(0.9209);transform-origin:0 0;-webkit-text-stroke:0.4px currentColor;">Theme Files</div>
<div class="r" style="left:1167px;top:126px;width:209px;height:624px;background:#f6f7f7;border:1px solid #dcdcde;box-sizing:border-box"></div>
<div class="r" style="left:1168px;top:127px;width:192px;height:622px;overflow:hidden">
<div class="t" id="t42" style="left:12.40px;top:-4.61px;font-size:13px;line-height:13px;color:#2271b1;transform:scaleX(0.9566);transform-origin:0 0;">Transparent Header Page</div>
<div class="t" id="t43" style="left:12.40px;top:13.49px;font-size:13px;line-height:13px;color:#2271b1;transform:scaleX(0.9910);transform-origin:0 0;">Template</div>
<div class="t" id="t44" style="left:24.60px;top:33.66px;font-size:11.5px;line-height:11.5px;color:#646970;transform:scaleX(0.9406);transform-origin:0 0;font-style:italic;">(page-single-page-nav-</div>
<div class="t" id="t45" style="left:12.40px;top:52.36px;font-size:11.5px;line-height:11.5px;color:#646970;transform:scaleX(0.9271);transform-origin:0 0;font-style:italic;">transparent.php)</div>
<div class="t" id="t46" style="left:12.40px;top:77.99px;font-size:13px;line-height:13px;color:#2271b1;transform:scaleX(0.9514);transform-origin:0 0;">Page - Single Page Nav Page</div>
<div class="t" id="t47" style="left:12.40px;top:95.69px;font-size:13px;line-height:13px;color:#2271b1;transform:scaleX(0.9910);transform-origin:0 0;">Template</div>
<div class="t" id="t48" style="left:24.60px;top:115.96px;font-size:11.5px;line-height:11.5px;color:#646970;transform:scaleX(0.9295);transform-origin:0 0;font-style:italic;">(page-single-page-nav.php)</div>
<div class="t" id="t49" style="left:12.40px;top:139.59px;font-size:13px;line-height:13px;color:#2271b1;transform:scaleX(0.9847);transform-origin:0 0;">Page - Full Width - Transparent</div>
<div class="t" id="t50" style="left:12.40px;top:157.69px;font-size:13px;line-height:13px;color:#2271b1;transform:scaleX(0.9776);transform-origin:0 0;">Header - Light Text Page</div>
<div class="t" id="t51" style="left:12.40px;top:176.39px;font-size:13px;line-height:13px;color:#2271b1;transform:scaleX(0.9910);transform-origin:0 0;">Template</div>
<div class="t" id="t52" style="left:24.60px;top:197.06px;font-size:11.5px;line-height:11.5px;color:#646970;transform:scaleX(0.9366);transform-origin:0 0;font-style:italic;">(page-transparent-header-</div>
<div class="t" id="t53" style="left:12.40px;top:215.36px;font-size:11.5px;line-height:11.5px;color:#646970;transform:scaleX(0.9480);transform-origin:0 0;font-style:italic;">light.php)</div>
<div class="t" id="t54" style="left:12.40px;top:239.59px;font-size:13px;line-height:13px;color:#2271b1;transform:scaleX(0.9847);transform-origin:0 0;">Page - Full Width - Transparent</div>
<div class="t" id="t55" style="left:12.40px;top:257.29px;font-size:13px;line-height:13px;color:#2271b1;transform:scaleX(0.9692);transform-origin:0 0;">Header Page Template</div>
<div class="t" id="t56" style="left:24.60px;top:278.36px;font-size:11.5px;line-height:11.5px;color:#646970;transform:scaleX(0.9260);transform-origin:0 0;font-style:italic;">(page-transparent-header.php)</div>
<div class="r" style="left:0px;top:296px;width:192px;height:30px;background:#fff;border:1px solid #c3c4c7;border-left:4px solid #72aee6;box-sizing:border-box"></div>
<div class="t" id="t57" style="left:12.40px;top:304.17px;font-size:13.5px;line-height:13.5px;color:#2271b1;transform:scaleX(0.9819);transform-origin:0 0;-webkit-text-stroke:0.4px currentColor;">page.php</div>
<div class="t" id="t58" style="left:12.40px;top:329.79px;font-size:13px;line-height:13px;color:#2271b1;transform:scaleX(0.9662);transform-origin:0 0;">search.php</div>
<div class="t" id="t59" style="left:12.40px;top:355.59px;font-size:13px;line-height:13px;color:#2271b1;transform:scaleX(0.9928);transform-origin:0 0;">searchform.php</div>
<div class="t" id="t60" style="left:12.40px;top:380.19px;font-size:13px;line-height:13px;color:#2271b1;transform:scaleX(0.9977);transform-origin:0 0;">sidebar.php</div>
<div class="t" id="t61" style="left:12.40px;top:406.39px;font-size:13px;line-height:13px;color:#2271b1;transform:scaleX(1.0013);transform-origin:0 0;">single-blocks.php</div>
<div class="t" id="t62" style="left:12.40px;top:431.39px;font-size:13px;line-height:13px;color:#2271b1;transform:scaleX(1.0020);transform-origin:0 0;">single-featured_item.php</div>
<div class="t" id="t63" style="left:12.40px;top:456.39px;font-size:13px;line-height:13px;color:#2271b1;transform:scaleX(0.9983);transform-origin:0 0;">single.php</div>
<div class="t" id="t64" style="left:12.40px;top:481.59px;font-size:13px;line-height:13px;color:#2271b1;transform:scaleX(1.0180);transform-origin:0 0;">taxonomy-</div>
<div class="t" id="t65" style="left:12.40px;top:499.29px;font-size:13px;line-height:13px;color:#2271b1;transform:scaleX(0.9954);transform-origin:0 0;">featured_item_category.php</div>
<div class="t" id="t66" style="left:12.40px;top:581.79px;font-size:13px;line-height:13px;color:#2271b1;transform:scaleX(0.9769);transform-origin:0 0;">changes.txt</div>
<div class="t" id="t67" style="left:12.40px;top:606.69px;font-size:13px;line-height:13px;color:#2271b1;transform:scaleX(1.0259);transform-origin:0 0;">wpml-config.xml</div>
<div class="t" id="t68" style="left:12.40px;top:528.19px;font-size:13px;line-height:13px;color:#3c434a;transform:scaleX(1.0229);transform-origin:0 0;">template-parts</div>
<div class="t" id="t69" style="left:12.40px;top:556.59px;font-size:13px;line-height:13px;color:#3c434a;transform:scaleX(1.0018);transform-origin:0 0;">woocommerce</div>
<svg class="r" style="left:105px;top:531.5px" width="6" height="8" viewBox="0 0 6 8"><path d="M0 0 L6 4 L0 8 Z" fill="#3c434a"/></svg>
<svg class="r" style="left:105px;top:559.5px" width="6" height="8" viewBox="0 0 6 8"><path d="M0 0 L6 4 L0 8 Z" fill="#3c434a"/></svg>
</div>
<div class="r" style="left:1360px;top:127px;width:15px;height:622px;background:#fafafa"></div>
<div class="r" style="left:1363px;top:538px;width:9px;height:190px;background:#8b8b8b;border-radius:4.5px"></div>
<svg class="r" style="left:1363px;top:132px" width="9" height="7" viewBox="0 0 9 7"><path d="M4.5 0.5 L8.8 6.8 H0.2 Z" fill="#8b8b8b"/></svg>
<svg class="r" style="left:1363px;top:738px" width="9" height="7" viewBox="0 0 9 7"><path d="M0.2 0.2 H8.8 L4.5 6.5 Z" fill="#8b8b8b"/></svg>
<div class="t" id="t70" style="left:182.60px;top:766.77px;font-size:13.5px;line-height:13.5px;color:#3c434a;transform:scaleX(1.0090);transform-origin:0 0;-webkit-text-stroke:0.4px currentColor;">Documentation:</div>
<div class="r" style="left:281px;top:760px;width:188px;height:30px;background:#fff;border:1px solid #8c8f94;border-radius:4px;box-sizing:border-box"></div>
<div class="t" id="t71" style="left:291.00px;top:768.15px;font-size:14px;line-height:14px;color:#2c3338;transform:scaleX(0.9785);transform-origin:0 0;">Function Name...</div>
<svg class="r" style="left:449px;top:771.5px" width="12" height="8" viewBox="0 0 12 8"><path d="M1 1 L6 6 L11 1" fill="none" stroke="#50575e" stroke-width="1.6"/></svg>
<div class="r" style="left:474px;top:760px;width:70px;height:30px;background:#f6f7f7;border:1px solid #dcdcde;border-radius:3px;box-sizing:border-box"></div>
<div class="t" id="t72" style="left:485.00px;top:768.99px;font-size:13px;line-height:13px;color:#a7aaad;transform:scaleX(1.0054);transform-origin:0 0;">Look Up</div>
<div class="r" style="left:182px;top:803px;width:87px;height:30px;background:#2271b1;border-radius:3px"></div>
<div class="t" id="t73" style="left:193.00px;top:811.87px;font-size:13.5px;line-height:13.5px;color:#ffffff;transform:scaleX(0.9584);transform-origin:0 0;">Update File</div>
<div class="r" style="left:917px;top:-10px;width:356px;height:55px;background:#f7fdfb;border-radius:9px;box-shadow:0 3px 11px rgba(0,0,0,0.27)"></div>
<div class="r" style="left:933px;top:11px;width:69px;height:16px;background:#93efe5"></div>
<div class="t" id="t74" style="left:934.00px;top:12.99px;font-size:13px;line-height:13px;color:#1d2327;transform:scaleX(1.0049);transform-origin:0 0;">the_content</div>
<div class="t" id="t75" style="left:1112.00px;top:13.49px;font-size:13px;line-height:13px;color:#50575e;transform:scaleX(1.0695);transform-origin:0 0;">0/1</div>
<div class="r" style="left:1148px;top:3px;width:1px;height:32px;background:#7eeee3"></div>
<svg class="r" style="left:1169px;top:15px" width="12" height="8" viewBox="0 0 12 8"><path d="M1 7 L6 2 L11 7" fill="none" stroke="#5f6368" stroke-width="1.8"/></svg>
<svg class="r" style="left:1205px;top:15px" width="12" height="8" viewBox="0 0 12 8"><path d="M1 1 L6 6 L11 1" fill="none" stroke="#5f6368" stroke-width="1.8"/></svg>
<svg class="r" style="left:1241px;top:14px" width="12" height="11" viewBox="0 0 12 11"><path d="M1.2 0.7 L10.8 10.3 M10.8 0.7 L1.2 10.3" fill="none" stroke="#5f6368" stroke-width="1.8"/></svg>
<div class="r" style="left:371px;top:308px;width:169px;height:45px;border:2.5px solid #ff1111;box-sizing:border-box"></div>
<div class="r" style="left:1160px;top:418px;width:111px;height:51px;border:2.5px solid #ff1111;box-sizing:border-box"></div>
<div class="r" style="left:12px;top:781px;width:150px;height:32px;border:2.5px solid #ff1111;box-sizing:border-box"></div>
</body></html>
